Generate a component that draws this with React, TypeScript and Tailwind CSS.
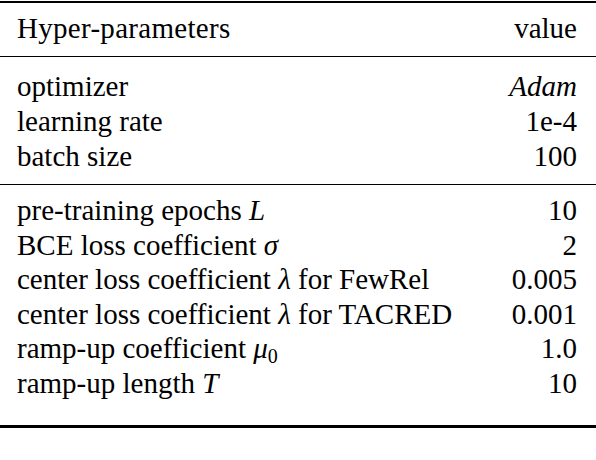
export default function App() {
  const top = [
    { name: <>optimizer</>, value: <i>Adam</i> },
    { name: <>learning rate</>, value: <>1e-4</> },
    { name: <>batch size</>, value: <>100</> },
  ];

  const bottom = [
    { name: <>pre-training epochs <i>L</i></>, value: <>10</> },
    { name: <>BCE loss coefficient <i>σ</i></>, value: <>2</> },
    { name: <>center loss coefficient <i>λ</i> for FewRel</>, value: <>0.005</> },
    { name: <>center loss coefficient <i>λ</i> for TACRED</>, value: <>0.001</> },
    {
      name: (
        <>
          ramp-up coefficient <i>μ</i>
          <span className="relative top-[5px] text-[20px] leading-none">0</span>
        </>
      ),
      value: <>1.0</>,
    },
    { name: <>ramp-up length <i>T</i></>, value: <>10</> },
  ];

  return (
    <div className="w-[596px] h-[460px] bg-white text-black font-serif text-[29px] leading-[35px]">
      <div className="pt-[0.5px] font-[Liberation_Serif,serif]">
        {/* TOP RULE */}
        <div className="h-[2.5px] bg-black" />

        {/* HEADER */}
        <div className="flex justify-between px-[17px] pt-[8px] pb-[9.5px]">
          <span className="tracking-[0.3px]">Hyper-parameters</span>
          <span className="pr-[2px]">value</span>
        </div>

        <div className="h-[1.5px] bg-black" />

        <div className="pt-[11.5px] pb-[10px]">
          {top.map((row, i) => (
            <div key={i} className="flex justify-between px-[17px]">
              <span>{row.name}</span>
              <span className="pr-[2px]">{row.value}</span>
            </div>
          ))}
        </div>

        <div className="h-[1.5px] bg-black" />

        <div className="pt-[8px] pb-[25px] leading-[34.5px]">
          {bottom.map((row, i) => (
            <div key={i} className="flex justify-between px-[17px] whitespace-nowrap">
              <span>{row.name}</span>
              <span className="pr-[2px]">{row.value}</span>
            </div>
          ))}
        </div>

        {/* BOTTOM RULE */}
        <div className="h-[2.5px] bg-black" />
      </div>
    </div>
  );
}
